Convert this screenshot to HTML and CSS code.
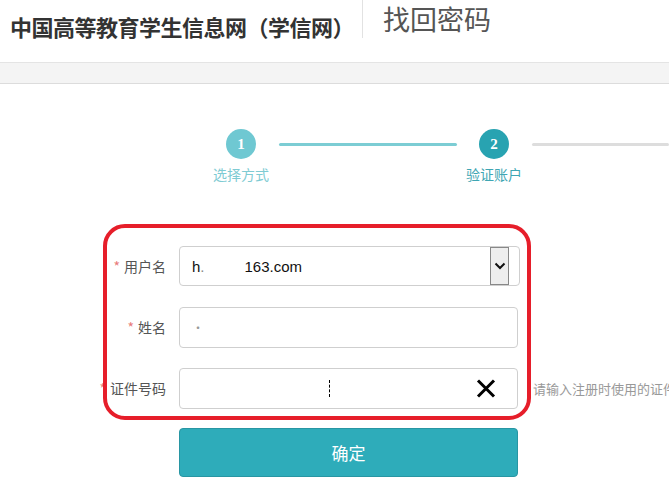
FILE: index.html
```html
<!DOCTYPE html>
<html lang="zh-CN">
<head>
    <meta charset="UTF-8">
    <meta name="viewport" content="width=device-width, initial-scale=1.0">
    <title>找回密码 - 学信网</title>
    <link rel="stylesheet" href="styles.css">
</head>
<body>

<div class="header">
    <h1 class="site-title">中国高等教育学生信息网（学信网）</h1>
    <span class="divider"></span>
    <h2 class="page-title">找回密码</h2>
</div>
<div class="band"></div>

<!-- Steps -->
<div class="steps">
    <div class="step done">
        <span class="circle">1</span>
        <span class="step-label">选择方式</span>
    </div>
    <span class="line done-line"></span>
    <div class="step current">
        <span class="circle">2</span>
        <span class="step-label">验证账户</span>
    </div>
    <span class="line todo-line"></span>
</div>

<div class="form-wrap">
    <div class="highlight"></div>

    <form class="form">
        <div class="row">
            <label class="label"><i>*</i>用户名</label>
            <div class="field select-field">
                <span class="value">h<span class="blur">.</span><span class="gap"></span>163.com</span>
                <span class="drop">
                    <svg width="12" height="8" viewBox="0 0 12 8"><path d="M1.5 1.5 L6 6 L10.5 1.5" fill="none" stroke="#111" stroke-width="2"/></svg>
                </span>
            </div>
        </div>

        <div class="row">
            <label class="label"><i>*</i>姓名</label>
            <div class="field">
                <span class="dot">·</span>
            </div>
        </div>

        <div class="row">
            <label class="label"><i>*</i>证件号码</label>
            <div class="field id-field">
                <span class="caret"></span>
                <svg class="clear" width="20" height="19" viewBox="0 0 20 19"><path d="M2 1.5 L18 17.5 M18 1.5 L2 17.5" stroke="#000" stroke-width="3"/></svg>
            </div>
            <span class="hint">请输入注册时使用的证件号码</span>
        </div>

        <button type="button" class="submit">确定</button>
    </form>
</div>

</body>
</html>
```

FILE: styles.css
```css
/* Resetting Defaults */
* {
    margin: 0;
    padding: 0;
    box-sizing: border-box;
}

body {
    font-family: "Noto Sans CJK SC", "Noto Sans", sans-serif;
    background-color: #ffffff;
    width: 669px;
    height: 503px;
    overflow: hidden;
    color: #555;
}

/* Header */
.header {
    height: 62px;
    display: flex;
    align-items: flex-start;
    padding-left: 10px;
}

.site-title {
    font-size: 22px;
    font-weight: bold;
    color: #333;
    margin-top: 10px;
    line-height: 32px;
    letter-spacing: -0.5px;
    white-space: nowrap;
}

.divider {
    width: 1px;
    height: 38px;
    background-color: #e2e2e2;
    margin-left: 8px;
}

.page-title {
    font-size: 27px;
    font-weight: normal;
    color: #555;
    margin-left: 20px;
    margin-top: 0;
    line-height: 38px;
}

.band {
    height: 22px;
    background-color: #f4f4f4;
    border-top: 1px solid #e4e4e4;
    border-bottom: 1px solid #dcdcdc;
}

/* Steps */
.steps {
    display: flex;
    align-items: flex-start;
    padding-left: 211px;
    margin-top: 45px;
}

.step {
    width: 60px;
    display: flex;
    flex-direction: column;
    align-items: center;
    flex-shrink: 0;
}

.circle {
    width: 30px;
    height: 30px;
    border-radius: 50%;
    color: #fff;
    font-family: "Liberation Serif", serif;
    font-weight: bold;
    font-size: 15px;
    line-height: 30px;
    text-align: center;
}

.step-label {
    font-size: 14px;
    margin-top: 5px;
    white-space: nowrap;
}

.done .circle {
    background-color: #6fc8d2;
}

.done .step-label {
    color: #7fcbd3;
}

.current .circle {
    background-color: #28a3b1;
}

.current .step-label {
    color: #3fa6b3;
}

.line {
    height: 3px;
    margin-top: 14px;
    border-radius: 2px;
}

.done-line {
    width: 178px;
    margin-left: 8px;
    margin-right: 7px;
    background-color: #7ccdd4;
}

.todo-line {
    flex: 1;
    margin-left: 8px;
    background-color: #dddddd;
}

/* Form */
.form-wrap {
    position: relative;
    margin-top: 42px;
}

.highlight {
    position: absolute;
    left: 103px;
    top: -2px;
    width: 428px;
    height: 196px;
    border: 4px solid #e61e2a;
    border-radius: 22px;
    pointer-events: none;
    z-index: 2;
}

.form {
    display: flex;
    flex-direction: column;
    gap: 21px;
    padding-top: 20px;
}

.row {
    display: flex;
    align-items: center;
    height: 40px;
}

.label {
    width: 166px;
    flex-shrink: 0;
    text-align: right;
    font-size: 14px;
    color: #555;
    white-space: nowrap;
}

.label i {
    font-style: normal;
    color: #e87a7a;
    margin-right: 4px;
}

.field {
    position: relative;
    margin-left: 13px;
    width: 339px;
    height: 41px;
    border: 1px solid #cfcfcf;
    border-radius: 4px;
    display: flex;
    align-items: center;
    padding-left: 12px;
    background-color: #fff;
    flex-shrink: 0;
}

.select-field {
    width: 341px;
    height: 40px;
}

.value {
    font-family: "Liberation Sans", Arial, sans-serif;
    font-size: 15px;
    color: #111;
    display: flex;
    align-items: center;
}

.blur {
    color: #888;
}

.gap {
    width: 40px;
}

.drop {
    position: absolute;
    right: 10px;
    top: 0;
    width: 19px;
    height: 38px;
    background-color: #eeeeee;
    border: 1px solid #888;
    display: flex;
    align-items: center;
    justify-content: center;
}

.dot {
    color: #999;
    font-size: 12px;
}

.caret {
    position: absolute;
    left: 149px;
    top: 11px;
    width: 1px;
    height: 17px;
    border-left: 1px dashed #000;
}

.clear {
    position: absolute;
    right: 21px;
    top: 10px;
}

.hint {
    margin-left: 15px;
    font-size: 13px;
    color: #999;
    white-space: nowrap;
    flex-shrink: 0;
}

.submit {
    margin-left: 179px;
    margin-top: -1px;
    width: 339px;
    height: 49px;
    background-color: #2eacba;
    border: 1px solid #2896a3;
    border-radius: 4px;
    color: #fff;
    font-family: "Noto Sans CJK SC", sans-serif;
    font-size: 17px;
}
```
